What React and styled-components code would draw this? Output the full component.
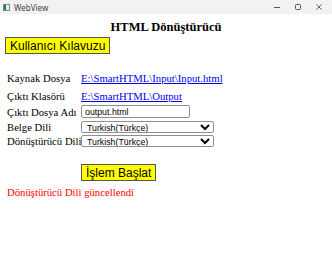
import React from "react";
import styled, { createGlobalStyle } from "styled-components";

const GlobalStyle = createGlobalStyle`
  html, body {
    margin: 0;
    padding: 0;
    background: #ffffff;
  }
  body {
    font-family: "Liberation Serif", "Times New Roman", serif;
    font-size: 10.7px;
    color: #000;
  }
`;

const rows = [
  { label: "Kaynak Dosya", kind: "link", value: "E:\\SmartHTML\\Input\\Input.html", h: 18 },
  { label: "Çıktı Klasörü", kind: "link", value: "E:\\SmartHTML\\Output", h: 17 },
  { label: "Çıktı Dosya Adı", kind: "input", value: "output.html", h: 15 },
  { label: "Belge Dili", kind: "select", value: "Turkish(Türkçe)", h: 15 },
  { label: "Dönüştürücü Dili", kind: "select", value: "Turkish(Türkçe)", h: 14 },
];

export default function App() {
  return (
    <Window>
      <GlobalStyle />
      <TitleBar>
        <AppIcon />
        <Title>WebView</Title>
        <Controls>
          <Control>
            <svg width="6" height="1" viewBox="0 0 6 1">
              <rect width="6" height="1" fill="#555" />
            </svg>
          </Control>
          <Control>
            <svg width="6" height="6" viewBox="0 0 6 6">
              <rect x="0.5" y="0.5" width="5" height="5" rx="1" fill="none" stroke="#555" />
            </svg>
          </Control>
          <Control>
            <svg width="6" height="6" viewBox="0 0 6 6">
              <path d="M0.5 0.5 L5.5 5.5 M5.5 0.5 L0.5 5.5" stroke="#555" strokeWidth="0.9" />
            </svg>
          </Control>
        </Controls>
      </TitleBar>
      <Content>
        <Heading>HTML Dönüştürücü</Heading>
        <YellowButton>Kullanıcı Kılavuzu</YellowButton>
        <Form>
          {rows.map((r) => (
            <Row key={r.label} $h={r.h}>
              <Label>{r.label}</Label>
              {r.kind === "link" && <PathLink href="#">{r.value}</PathLink>}
              {r.kind === "input" && <TextInput defaultValue={r.value} />}
              {r.kind === "select" && (
                <Select defaultValue={r.value}>
                  <option>{r.value}</option>
                </Select>
              )}
            </Row>
          ))}
        </Form>
        <StartRow>
          <YellowButton>İşlem Başlat</YellowButton>
        </StartRow>
        <Status>Dönüştürücü Dili güncellendi</Status>
      </Content>
    </Window>
  );
}

const Window = styled.div`
  width: 100%;
  height: 253px;
  display: flex;
  flex-direction: column;
  background: #fff;
`;

const TitleBar = styled.div`
  height: 14px;
  display: flex;
  align-items: center;
  background: #f2f2f2;
  padding: 0 10px 0 3px;
`;

const AppIcon = styled.div`
  width: 5px;
  height: 5px;
  border: 1px solid #7a8a99;
  background: linear-gradient(90deg, #2e6f5e 0 40%, #e8eef3 40%);
  margin-right: 4px;
`;

const Title = styled.span`
  font-family: "Noto Sans", "DejaVu Sans", sans-serif;
  font-size: 8px;
  color: #444;
`;

const Controls = styled.div`
  margin-left: auto;
  display: flex;
  gap: 14px;
  align-items: center;
`;

const Control = styled.div`
  width: 7px;
  display: flex;
  align-items: center;
  justify-content: center;
`;

const Content = styled.div`
  padding: 0 5px;
`;

const Heading = styled.h3`
  margin: 6px 0 2px;
  text-align: center;
  font-size: 12.5px;
  font-weight: bold;
  line-height: 15px;
`;

const YellowButton = styled.button`
  background: #ffff00;
  border: 1px solid #555;
  font-family: "Liberation Sans", Arial, sans-serif;
  font-size: 12px;
  line-height: 14px;
  color: #000;
  padding: 0 4px;
  height: 17px;
  margin: 0;
`;

const Form = styled.div`
  margin-top: 15px;
  display: flex;
  flex-direction: column;
`;

const Row = styled.div`
  height: ${(p) => p.$h}px;
  display: grid;
  grid-template-columns: 76px auto;
  align-items: center;
`;

const Label = styled.span`
  padding-left: 2px;
  white-space: nowrap;
`;

const PathLink = styled.a`
  color: #0000ee;
  text-decoration: underline;
  justify-self: start;
`;

const TextInput = styled.input`
  width: 109px;
  height: 13px;
  box-sizing: border-box;
  border: 1px solid #8f8f8f;
  border-radius: 2px;
  padding: 0 3px;
  font-family: "Liberation Sans", Arial, sans-serif;
  font-size: 8.8px;
  justify-self: start;
`;

const Select = styled.select`
  width: 133px;
  height: 12px;
  box-sizing: border-box;
  border: 1px solid #8f8f8f;
  border-radius: 2px;
  padding: 0 1px;
  font-family: "Liberation Sans", Arial, sans-serif;
  font-size: 8.8px;
  background: #fff;
  color: #000;
  justify-self: start;
`;

const StartRow = styled.div`
  padding-left: 76px;
  margin-top: 16px;
`;

const Status = styled.div`
  color: #ff0000;
  padding-left: 2px;
  margin-top: 5px;
  line-height: 12px;
`;
